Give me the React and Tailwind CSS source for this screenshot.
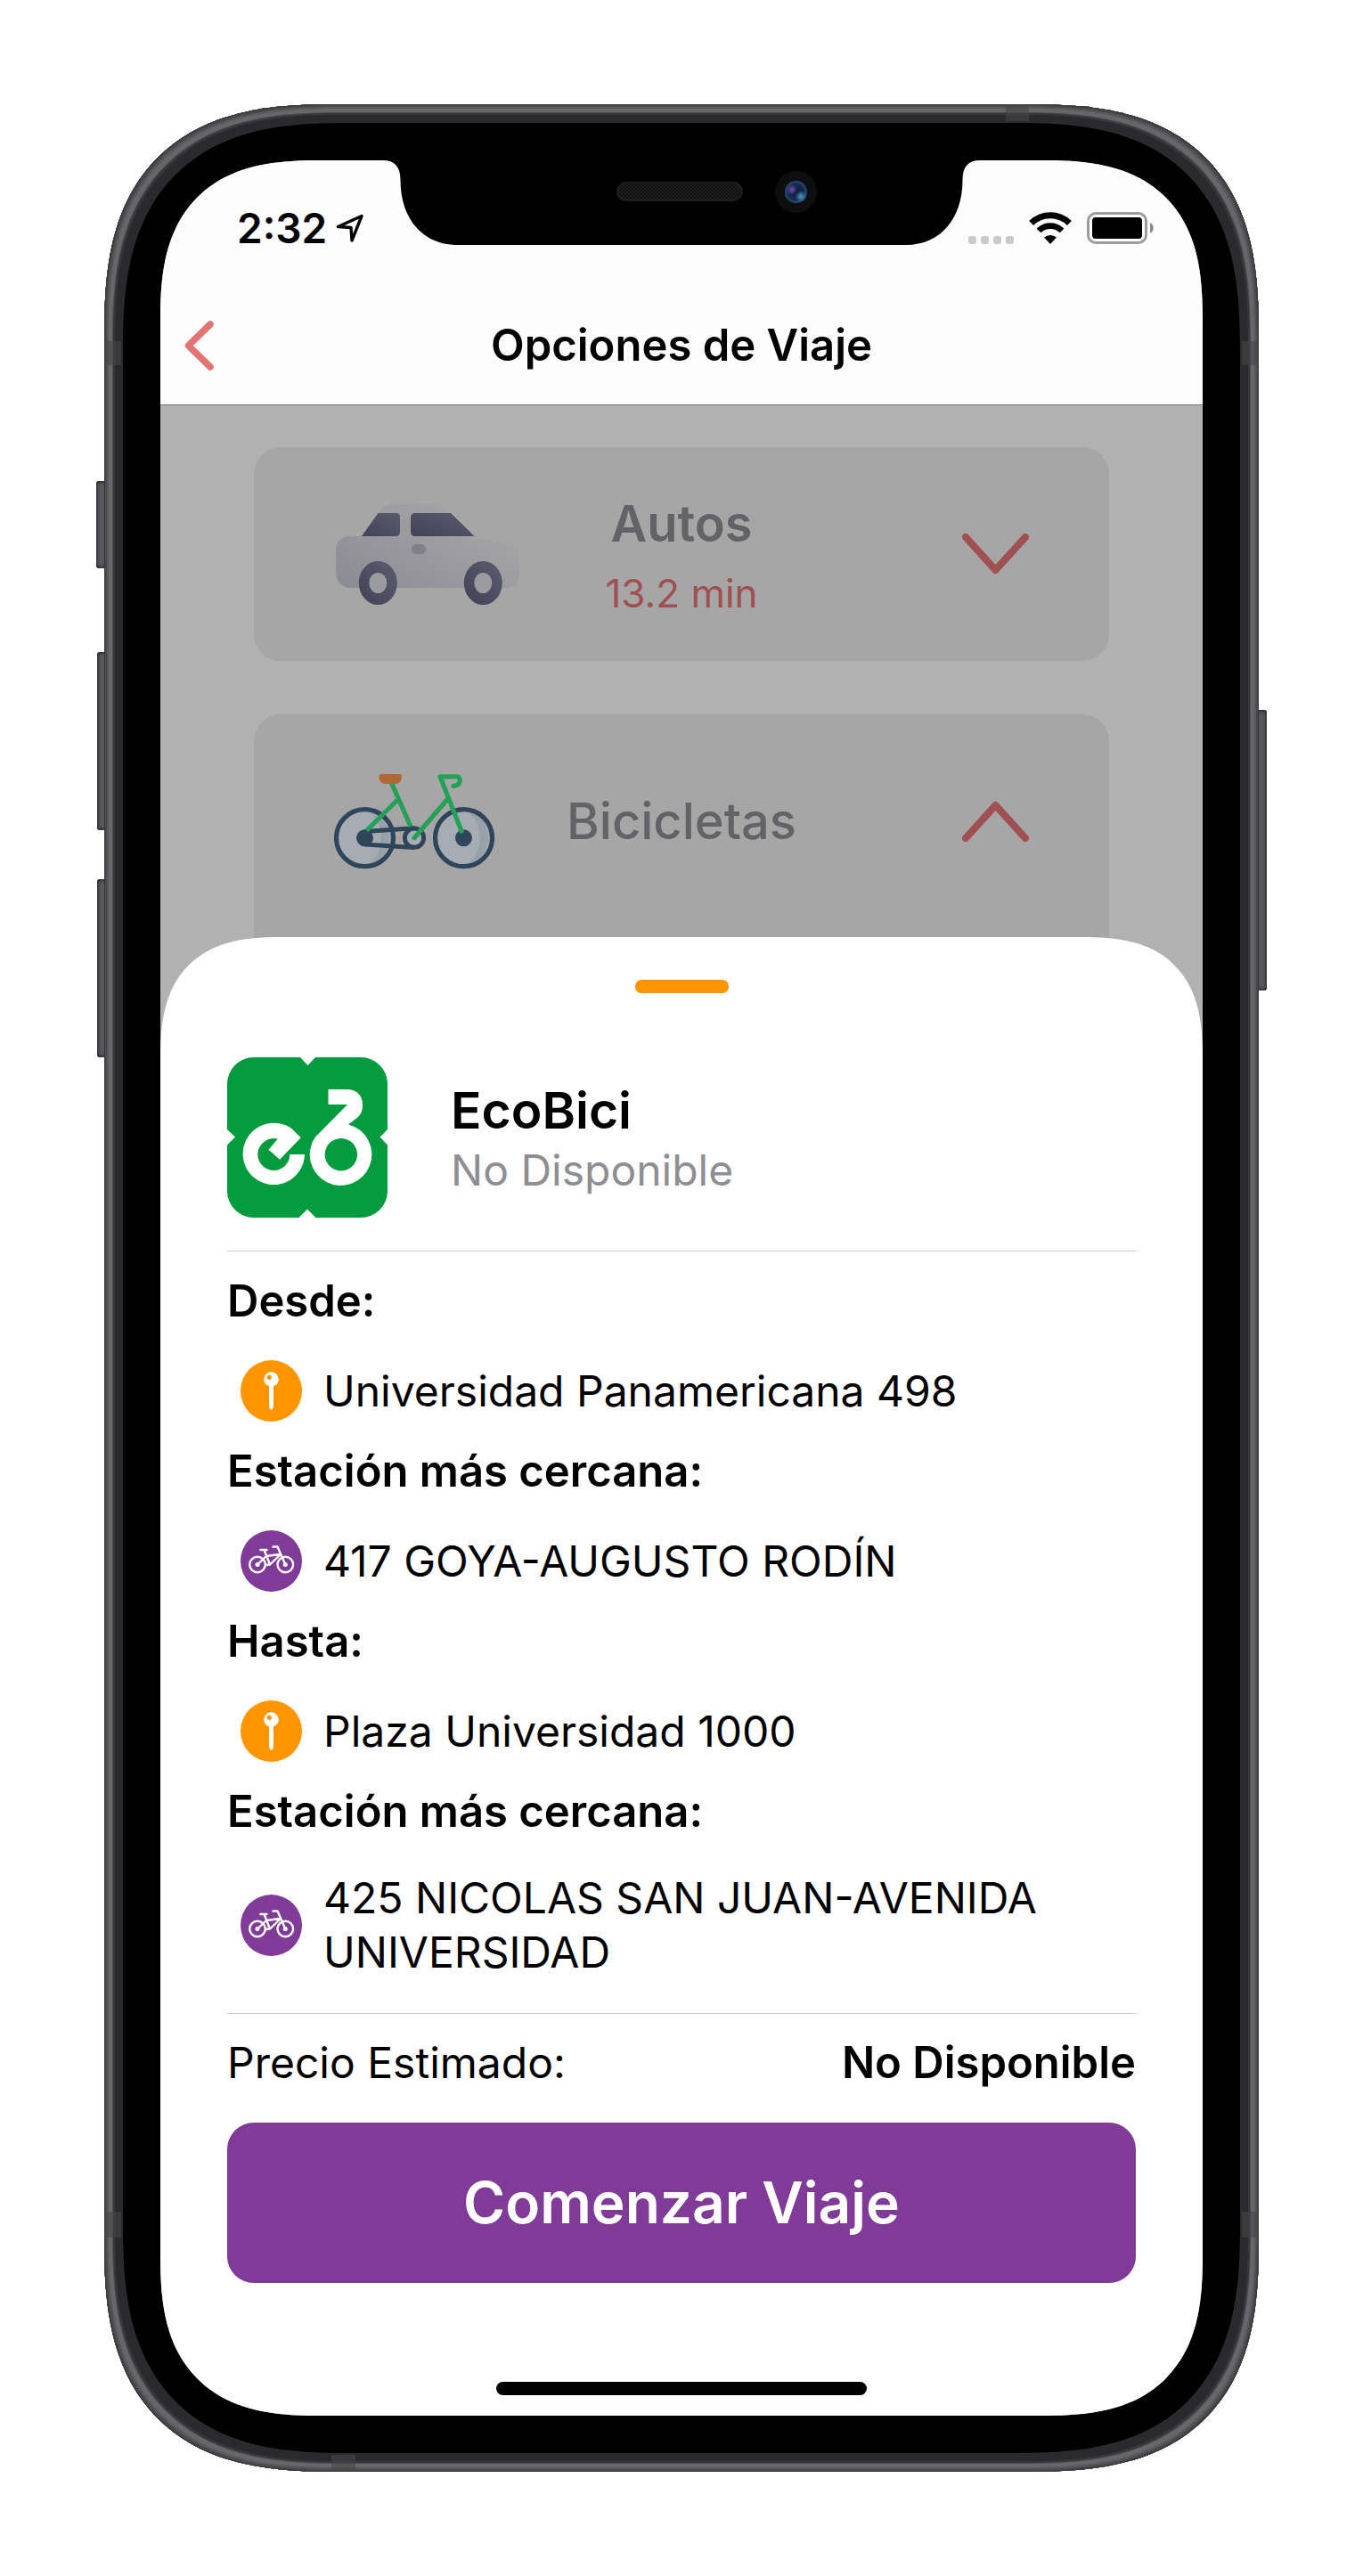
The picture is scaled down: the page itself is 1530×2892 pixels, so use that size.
import React from "react";

function LocationArrow() {
  return (
    <svg viewBox="0 0 32 32" className="h-8 w-8" fill="none" stroke="currentColor" strokeWidth="3.4" strokeLinejoin="round" aria-hidden="true">
      <path d="M29 2.500 L2.500 14.500 L17 15.500 L18 30 Z" />
    </svg>
  );
}

function SignalDots() {
  return (
    <div className="flex gap-[5px]" aria-hidden="true">
      <span className="size-[9px] rounded-[3px] bg-[#cacaca]" />
      <span className="size-[9px] rounded-[3px] bg-[#cacaca]" />
      <span className="size-[9px] rounded-[3px] bg-[#cacaca]" />
      <span className="size-[9px] rounded-[3px] bg-[#cacaca]" />
    </div>
  );
}

function WifiIcon() {
  return (
    <svg viewBox="0 0 48 36" className="h-9 w-12" aria-hidden="true">
      <path d="M2.6 12.4 A30.5 30.5 0 0 1 45.4 12.4" fill="none" stroke="#000" strokeWidth="7" />
      <path d="M11 21 A18.5 18.5 0 0 1 37 21" fill="none" stroke="#000" strokeWidth="6.6" />
      <path d="M24 36 L17 28.6 A10.5 10.5 0 0 1 31 28.6 Z" fill="#000" />
    </svg>
  );
}

function BatteryIcon() {
  return (
    <svg viewBox="0 0 75 36" className="h-9 w-[75px]" aria-hidden="true">
      <rect x="1.5" y="1.5" width="65" height="33" rx="8.5" fill="none" stroke="#9d9d9d" strokeWidth="3" />
      <rect x="6" y="6" width="56" height="24" rx="4" fill="#000" />
      <path d="M71 12 C76 14 76 22 71 24 Z" fill="#8c8c8c" />
    </svg>
  );
}

function Chevron({ up }) {
  return (
    <svg viewBox="0 0 75 46" className="h-[46px] w-[75px]" fill="none" stroke="#a05050" strokeWidth="8" strokeLinecap="round" strokeLinejoin="round" aria-hidden="true">
      {up ? <path d="M4 42 L37.5 5 L71 42" /> : <path d="M4 4 L37.5 41 L71 4" />}
    </svg>
  );
}

function CarIcon() {
  return (
    <svg viewBox="0 0 210 113" className="h-[113px] w-[210px]" aria-hidden="true">
      <defs>
        <linearGradient id="carBody" x1="0" y1="1" x2="1" y2="0.2">
          <stop offset="0" stopColor="#8a8a94" />
          <stop offset="0.5" stopColor="#9a999f" />
          <stop offset="0.9" stopColor="#a5a5a6" />
          <stop offset="1" stopColor="#a6a6a6" />
        </linearGradient>
        <linearGradient id="carGlass" x1="0" y1="1" x2="1" y2="0">
          <stop offset="0" stopColor="#424258" />
          <stop offset="1" stopColor="#5c5b6e" />
        </linearGradient>
      </defs>
      <path d="M16 36 H31 L50 10 C55 3 59 0 65 0 H115 C121 0 125 4 131 10 L157 36 L194 44 C202 46 208 50 208 59 V79 C208 88 202 94 193 94 H18 C9 94 2 86 2 77 V51 C2 43 8 36 16 36 Z" fill="url(#carBody)" />
      <path d="M31 36 L49.5 10 H70 C73 10 74 12 74 14 V31 C74 34 72 36 69 36 Z" fill="url(#carGlass)" />
      <path d="M86 15 C86 12 88 10 91 10 H131 L157.500 36 H91 C88 36 86 34 86 31 Z" fill="url(#carGlass)" />
      <rect x="87" y="45" width="16" height="11" rx="5" fill="#80808a" />
      <ellipse cx="49.300" cy="88.500" rx="21.500" ry="24.500" fill="url(#carGlass)" />
      <ellipse cx="49.300" cy="88.500" rx="10" ry="11.500" fill="#9a9a9f" />
      <ellipse cx="167.300" cy="88.500" rx="21.500" ry="24.500" fill="url(#carGlass)" />
      <ellipse cx="167.300" cy="88.500" rx="10" ry="11.500" fill="#9a9a9f" />
    </svg>
  );
}

function BikeIcon() {
  return (
    <svg viewBox="0 0 180 107" className="h-[107px] w-[180px]" fill="none" aria-hidden="true">
      <g stroke="#2f455a">
        <circle cx="34.500" cy="71.700" r="32" fill="#a6acb4" stroke="none" />
        <path d="M34.500 40 A32 32 0 0 1 34.500 103.400 C59 92 59 51 34.500 40 Z" fill="#98a0a8" stroke="none" />
        <circle cx="34.500" cy="71.700" r="32" strokeWidth="5.200" />
        <circle cx="145.500" cy="71.700" r="32" fill="#a6acb4" stroke="none" />
        <path d="M145.500 40 A32 32 0 0 1 145.500 103.400 C170 92 170 51 145.500 40 Z" fill="#98a0a8" stroke="none" />
        <circle cx="145.500" cy="71.700" r="32" strokeWidth="5.200" />
        <circle cx="90" cy="71.700" r="10.600" fill="#a8aeb5" strokeWidth="5" />
        <path d="M34.500 64.500 L90 60.800 M34.500 79 L90 82.600" strokeWidth="5" />
        <circle cx="34.500" cy="71.700" r="9.500" fill="#2f455a" stroke="none" />
        <circle cx="145.500" cy="71.700" r="9.500" fill="#2f455a" stroke="none" />
      </g>
      <g stroke="#24a156" strokeWidth="5.200">
        <path d="M64.500 10 L86 59" />
        <path d="M36.500 63.500 L71.700 28.500" />
        <path d="M90 71.700 L127.500 28" strokeLinecap="round" />
        <path d="M143 64 L119 2.800 H138 C143 3 143 13 134 13.300" strokeLinecap="round" strokeLinejoin="round" />
      </g>
      <path d="M53 0 H73.500 C75 0 76 1 76 3 C76 7.500 73 11 69 11 H57.500 C53.500 11 50.300 7.500 50.300 3 C50.300 1 51.500 0 53 0 Z" fill="#b06835" />
    </svg>
  );
}

function EcoBiciLogo() {
  return (
    <svg viewBox="0 0 180 180" className="size-[180px] shrink-0" role="img" aria-label="EcoBici">
      <path
        d="M30 0 H82 L90.500 9 L99 0 H150 A30 30 0 0 1 180 30 V81 L171.500 89.500 L180 98.500 V150 A30 30 0 0 1 150 180 H99.500 L90 170.500 L80.500 180 H30 A30 30 0 0 1 0 150 V98.500 L9 89.500 L0 81 V30 A30 30 0 0 1 30 0 Z"
        fill="#029b3e"
      />
      <path d="M82.700 90.300 L59 114.700 L46.500 103.700 L56.800 91.600 A18 18 0 1 0 70.300 109 H87 A34.700 34.700 0 1 1 73 80.500 Z" fill="#fff" />
      <path
        fillRule="evenodd"
        d="M113.500 36 H134 C146 36 152 43 152 54 C152 60 150 64 147 67 L136 75.400 A34.800 34.800 0 1 1 98.500 90 L135 53 H113.500 Z M127.800 91 A18.200 18.200 0 1 0 127.900 91 Z"
        fill="#fff"
      />
    </svg>
  );
}

function PinBadge() {
  return (
    <svg viewBox="0 0 69 69" className="size-[69px] shrink-0" aria-hidden="true">
      <circle cx="34.500" cy="34.500" r="34.500" fill="#ff9500" />
      <path d="M32 27 H37 V49 C37 53 36 56 34.500 56 C33 56 32 53 32 49 Z" fill="#fff" />
      <circle cx="34.500" cy="21.500" r="8.300" fill="#fff" />
      <circle cx="32.300" cy="19.300" r="2.600" fill="#ff9500" />
    </svg>
  );
}

function BikeBadge() {
  return (
    <svg viewBox="0 0 69 69" className="size-[69px] shrink-0" aria-hidden="true">
      <circle cx="34.500" cy="34.500" r="34.500" fill="#803a98" />
      <g fill="none" stroke="#fff" strokeWidth="2.400" strokeLinecap="round" strokeLinejoin="round">
        <circle cx="19" cy="38.500" r="8.800" />
        <circle cx="50.300" cy="38.500" r="8.800" />
        <path d="M22.300 22 H29.500 M26.500 22 L33 38.500 M29 29 L44 27 M19 38.500 L29 29 M28 39 L33 38.500 L44.500 27.500 M36.500 18.500 H41.500 L50.300 38.500" />
      </g>
      <circle cx="19" cy="38.500" r="2.500" fill="#fff" />
      <circle cx="50.300" cy="38.500" r="2.500" fill="#fff" />
    </svg>
  );
}

function Notch() {
  return (
    <svg viewBox="0 0 700 96" className="absolute -top-px left-1/2 h-24 w-[700px] -translate-x-1/2" aria-hidden="true">
      <defs>
        <pattern id="mesh" width="4" height="4" patternUnits="userSpaceOnUse">
          <rect width="4" height="4" fill="#101010" />
          <rect width="2" height="2" fill="#1e1e1e" />
          <rect x="2" y="2" width="2" height="2" fill="#1e1e1e" />
        </pattern>
        <radialGradient id="lens">
          <stop offset="0" stopColor="#0d1736" />
          <stop offset="0.7" stopColor="#15294f" />
          <stop offset="1" stopColor="#27507c" />
        </radialGradient>
        <radialGradient id="lensViolet">
          <stop offset="0" stopColor="#7a4cae" />
          <stop offset="1" stopColor="#7a4cae" stopOpacity="0" />
        </radialGradient>
        <radialGradient id="lensCyan">
          <stop offset="0" stopColor="#4c9cc4" />
          <stop offset="1" stopColor="#4c9cc4" stopOpacity="0" />
        </radialGradient>
      </defs>
      <path d="M15 0 V1 C28 1 34.500 8 34.500 23 C34.500 67 60 96 98 96 H602 C640 96 665.500 67 665.500 23 C665.500 8 672 1 685 1 V0 Z" fill="#000" />
      <rect x="278" y="26" width="140" height="20" rx="10" fill="url(#mesh)" stroke="#232323" strokeWidth="1.500" />
      <circle cx="478.500" cy="36.500" r="23.500" fill="#0e0e0e" />
      <circle cx="478.500" cy="36.500" r="12.500" fill="url(#lens)" />
      <circle cx="474" cy="34" r="6" fill="url(#lensViolet)" />
      <circle cx="484" cy="41.500" r="6.500" fill="url(#lensCyan)" />
    </svg>
  );
}

function SideKey({ className }) {
  return <span className={"absolute bg-[#5a5a61] shadow-[inset_0_0_4px_1px_#1d1d22] " + className} />;
}

function AntennaBand({ className }) {
  return <span className={"absolute bg-[#464646]/60 " + className} />;
}

function OptionHeader({ icon, title, titleClass, detail, open }) {
  return (
    <button type="button" aria-expanded={open} className="grid h-60 w-full grid-cols-[1fr_auto_1fr] items-center px-[90px] text-center">
      <span>{icon}</span>
      <span className="flex flex-col gap-4">
        <span className={"text-[56px] leading-[72px] text-[#636367] " + titleClass}>{title}</span>
        {detail && <span className="text-[44px] leading-[52px] text-[#a05050]">{detail}</span>}
      </span>
      <span className="justify-self-end">
        <Chevron up={open} />
      </span>
    </button>
  );
}

function Stop({ label, badge, children }) {
  return (
    <div>
      <dt className="text-[49px] font-semibold">{label}</dt>
      <dd className="flex items-center gap-6 px-[15px] pt-9 pb-[25px]">
        {badge}
        <span>{children}</span>
      </dd>
    </div>
  );
}

export default function App() {
  return (
    <main className="bg-white p-[117px] font-['Inter',sans-serif] text-black">
      <div className="relative">
        <SideKey className="top-[423px] -left-[9px] h-[98px] w-3 rounded-l-[3px]" />
        <SideKey className="top-[615px] -left-2 h-[200px] w-3 rounded-l-[3px]" />
        <SideKey className="top-[870px] -left-2 h-[200px] w-3 rounded-l-[3px]" />
        <SideKey className="top-[680px] -right-[9px] h-[315px] w-3 rounded-r-[3px]" />

        <div className="relative overflow-hidden rounded-[260px] bg-black p-[63px] [corner-shape:superellipse(1.4)] shadow-[inset_0_0_0_1px_#38383a,inset_0_0_0_3px_#49494c,inset_0_0_0_5px_#58585c,inset_0_0_0_9px_#66666b,inset_0_0_0_10px_#4c4c51,inset_0_0_0_12px_#36363b,inset_0_0_0_19px_#29292e,inset_0_0_0_21px_#2b2b2b]">
          <AntennaBand className="top-0 right-[258px] h-[19px] w-[26px]" />
          <AntennaBand className="bottom-0 left-[255px] h-[19px] w-[27px]" />
          <AntennaBand className="top-[266px] left-0 h-[27px] w-[19px]" />
          <AntennaBand className="top-[266px] right-0 h-[27px] w-[19px]" />
          <AntennaBand className="bottom-[263px] left-0 h-[29px] w-[19px]" />
          <AntennaBand className="right-0 bottom-[263px] h-[29px] w-[19px]" />

          <div className="relative flex flex-col overflow-hidden rounded-[180px] bg-[#b1b1b1] [corner-shape:superellipse(1.4)]">
            <header className="border-b border-[#7c7c7c] bg-[#fdfdfd]">
              <div className="flex h-[141px] items-center justify-between pt-[10px] pr-[55px] pl-[86px]">
                <div className="flex items-center gap-[10px]">
                  <span className="text-[46px] leading-[60px] font-semibold">2:32</span>
                  <LocationArrow />
                </div>
                <div className="flex items-end gap-[17px]">
                  <SignalDots />
                  <WifiIcon />
                  <BatteryIcon />
                </div>
              </div>
              <div className="grid h-[133px] grid-cols-[1fr_auto_1fr] items-center px-[27px]">
                <button type="button" aria-label="Atrás" className="justify-self-start">
                  <svg viewBox="0 0 33 56" className="h-14 w-[33px]" fill="none" stroke="#e27474" strokeWidth="7.500" strokeLinecap="round" strokeLinejoin="round" aria-hidden="true">
                    <path d="M29 4 L4.500 28 L29 52" />
                  </svg>
                </button>
                <h1 className="text-[49px] leading-[61px] font-semibold">Opciones de Viaje</h1>
              </div>
            </header>
            <Notch />

            <section className="flex flex-col gap-[60px] px-[105px] pt-[47px]">
              <article className="rounded-[30px] bg-[#a6a6a6]">
                <OptionHeader icon={<CarIcon />} title="Autos" titleClass="font-semibold" detail="13.2 min" open={false} />
              </article>
              <article className="rounded-t-[30px] bg-[#a6a6a6] pb-5">
                <OptionHeader icon={<BikeIcon />} title="Bicicletas" titleClass="font-medium" open />
              </article>
            </section>

            <section className="relative -mt-[10px] flex flex-col rounded-t-[137px] bg-white px-[75px] pt-12 pb-[23px] text-[48px] leading-[61px] [corner-shape:superellipse(1.4)]">
              <div className="h-[15px] w-[105px] self-center rounded-[7px] bg-[#ff9500]" />
              <div className="mt-[72px] flex items-center gap-[71px] border-b border-[#c6c6c8] pb-[37px]">
                <EcoBiciLogo />
                <div>
                  <h2 className="text-[57px] leading-[72px] font-semibold">EcoBici</h2>
                  <p className="text-[#8e8e93]">No Disponible</p>
                </div>
              </div>

              <dl className="border-b border-[#c6c6c8] pt-[25px] pb-[13px] leading-[61px]">
                <Stop label="Desde:" badge={<PinBadge />}>Universidad Panamericana 498</Stop>
                <Stop label="Estación más cercana:" badge={<BikeBadge />}>417 GOYA-AUGUSTO RODÍN</Stop>
                <Stop label="Hasta:" badge={<PinBadge />}>Plaza Universidad 1000</Stop>
                <Stop label="Estación más cercana:" badge={<BikeBadge />}>425 NICOLAS SAN JUAN-AVENIDA UNIVERSIDAD</Stop>
              </dl>

              <div className="flex justify-between pt-6">
                <span>Precio Estimado:</span>
                <strong className="text-[49px] leading-[61px] font-semibold">No Disponible</strong>
              </div>
              <button type="button" className="mt-[37px] h-[180px] rounded-[30px] bg-[#803a98] text-[64px] leading-[80px] font-semibold text-white">
                Comenzar Viaje
              </button>
              <div className="mt-[111px] h-[15px] w-[416px] self-center rounded-full bg-black" />
            </section>
          </div>
        </div>
      </div>
    </main>
  );
}
